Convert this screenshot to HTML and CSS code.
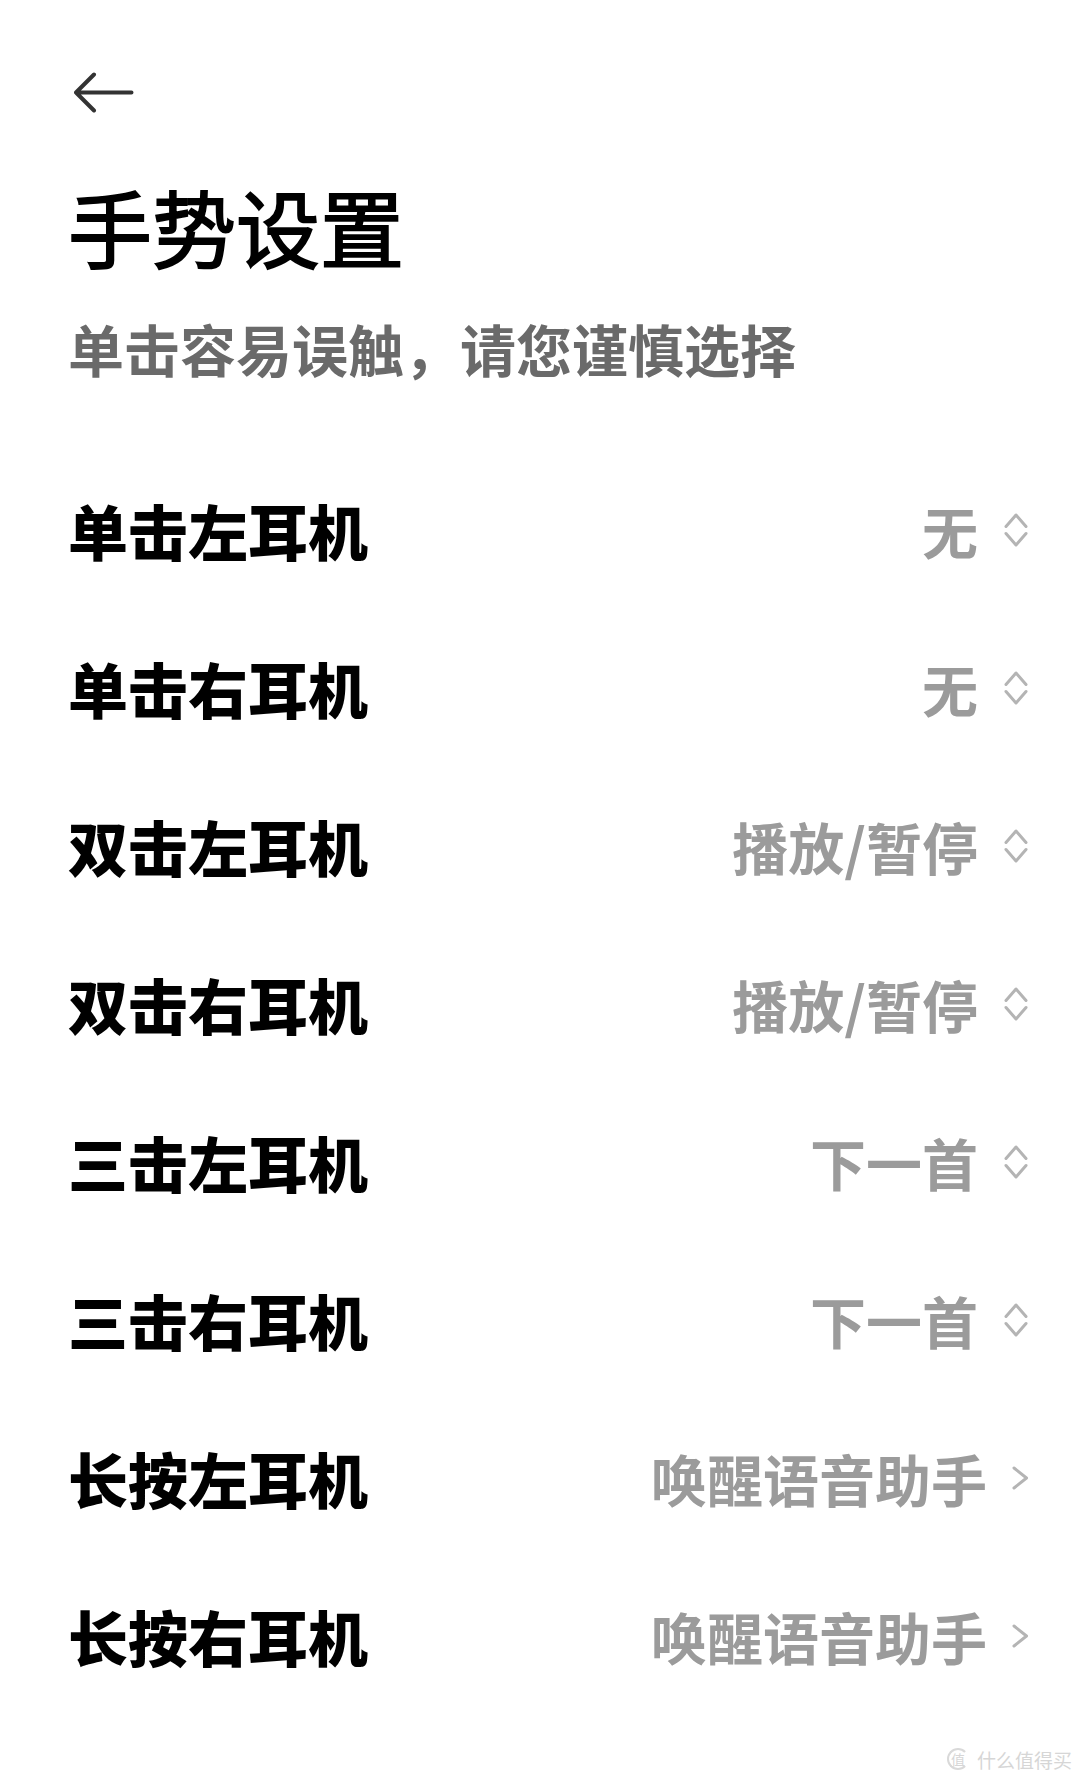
FILE: index.html
```html
<!DOCTYPE html>
<html lang="zh-CN">
<head>
<meta charset="utf-8">
<title>手势设置</title>
<link rel="stylesheet" href="styles.css">
</head>
<body>
<div class="page">
  <header class="topbar">
    <svg class="back" width="60" height="41" viewBox="0 0 60 41" aria-label="返回">
      <path d="M2 20.5 H57.5 M20 2.5 L2 20.5 L20 38.5" fill="none" stroke="#333" stroke-width="4" stroke-linecap="round" stroke-linejoin="round"/>
    </svg>
  </header>

  <h1 class="title">手势设置</h1>
  <p class="subtitle">单击容易误触，请您谨慎选择</p>

  <ul class="list">
    <li class="row"><span class="label">单击左耳机</span><span class="value">无</span><svg class="icon" width="26" height="40" viewBox="0 0 26 40"><path d="M3 16.5 L13 5 L23 16.5 M3 23.5 L13 35 L23 23.5"/></svg></li>
    <li class="row"><span class="label">单击右耳机</span><span class="value">无</span><svg class="icon" width="26" height="40" viewBox="0 0 26 40"><path d="M3 16.5 L13 5 L23 16.5 M3 23.5 L13 35 L23 23.5"/></svg></li>
    <li class="row"><span class="label">双击左耳机</span><span class="value">播放/暂停</span><svg class="icon" width="26" height="40" viewBox="0 0 26 40"><path d="M3 16.5 L13 5 L23 16.5 M3 23.5 L13 35 L23 23.5"/></svg></li>
    <li class="row"><span class="label">双击右耳机</span><span class="value">播放/暂停</span><svg class="icon" width="26" height="40" viewBox="0 0 26 40"><path d="M3 16.5 L13 5 L23 16.5 M3 23.5 L13 35 L23 23.5"/></svg></li>
    <li class="row"><span class="label">三击左耳机</span><span class="value">下一首</span><svg class="icon" width="26" height="40" viewBox="0 0 26 40"><path d="M3 16.5 L13 5 L23 16.5 M3 23.5 L13 35 L23 23.5"/></svg></li>
    <li class="row"><span class="label">三击右耳机</span><span class="value">下一首</span><svg class="icon" width="26" height="40" viewBox="0 0 26 40"><path d="M3 16.5 L13 5 L23 16.5 M3 23.5 L13 35 L23 23.5"/></svg></li>
    <li class="row"><span class="label">长按左耳机</span><span class="value">唤醒语音助手</span><svg class="icon" width="17" height="24" viewBox="0 0 17 24"><path d="M2 2 L14.5 12 L2 22"/></svg></li>
    <li class="row"><span class="label">长按右耳机</span><span class="value">唤醒语音助手</span><svg class="icon" width="17" height="24" viewBox="0 0 17 24"><path d="M2 2 L14.5 12 L2 22"/></svg></li>
  </ul>

  <div class="watermark"><span class="wm-logo">值</span><span class="wm-text">什么值得买</span></div>
</div>
</body>
</html>
```

FILE: styles.css
```css
* {
  box-sizing: border-box;
}

html, body {
  margin: 0;
  padding: 0;
  background: #fff;
}

body {
  font-family: "Noto Sans CJK SC", "Noto Sans", sans-serif;
  color: #000;
}

.page {
  position: relative;
  width: 1080px;
  height: 1780px;
  padding: 72px 51px 0 68px;
}

.topbar {
  height: 41px;
  display: flex;
  align-items: center;
}

.back {
  display: block;
  margin-left: 6px;
}

/* medium-weight heading: regular cut thickened a little */
.title {
  margin: 71px 0 0;
  font-size: 84px;
  line-height: 84px;
  font-weight: 400;
  -webkit-text-stroke: 1.8px #000;
  color: #000;
}

.subtitle {
  margin: 52px 0 0;
  font-size: 56px;
  line-height: 56px;
  font-weight: 700;
  color: #6a6a6a;
}

.list {
  list-style: none;
  margin: 75px 0 0;
  padding: 0;
}

.row {
  height: 158px;
  display: flex;
  align-items: center;
}

.label {
  flex: 1;
  font-size: 60px;
  line-height: 1;
  font-weight: 900;
  color: #000;
}

.value {
  font-size: 56px;
  line-height: 1;
  font-weight: 700;
  color: #9b9b9b;
  margin-right: 25px;
}

.icon {
  display: block;
  flex: none;
}

.icon path {
  fill: none;
  stroke: #b4b4b4;
  stroke-width: 3;
  stroke-linecap: round;
  stroke-linejoin: round;
}

.watermark {
  position: absolute;
  right: 8px;
  bottom: 10px;
  display: flex;
  align-items: center;
  gap: 8px;
  color: #d6d6d6;
}

.wm-logo {
  width: 22px;
  height: 22px;
  border: 2px solid #d9d9d9;
  border-right-color: transparent;
  border-radius: 50%;
  font-size: 14px;
  line-height: 18px;
  text-align: center;
}

.wm-text {
  font-size: 19px;
  line-height: 1;
}
```
